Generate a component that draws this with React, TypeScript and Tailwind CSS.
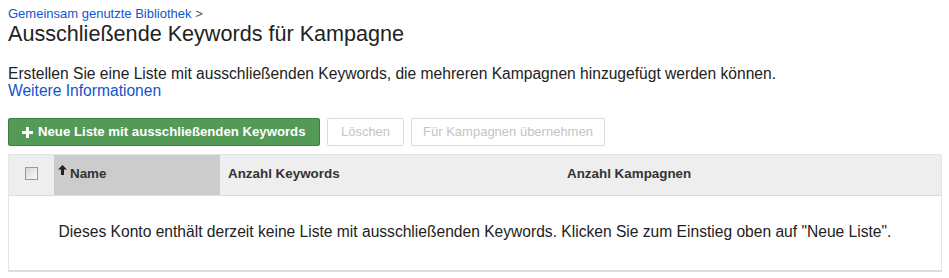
import React from "react";

export default function App() {
  return (
    <div className="w-[949px] h-[278px] bg-white text-[#222] overflow-hidden" style={{ fontFamily: '"Liberation Sans", Arial, sans-serif' }}>
      <div className="pl-[8px] pr-[7px] pt-[6px]">
        <div className="text-[13px] leading-[16px] text-[#1155cc]">
          Gemeinsam genutzte Bibliothek <span className="text-[#555]">&gt;</span>
        </div>
        <h1 className="text-[21.6px] leading-[24px] text-[#222]">Ausschließende Keywords für Kampagne</h1>
        <p className="text-[15.6px] leading-[17px] mt-[19px] text-[#222]">
          Erstellen Sie eine Liste mit ausschließenden Keywords, die mehreren Kampagnen hinzugefügt werden können.
        </p>
        <a className="block text-[15.6px] leading-[17px] text-[#1155cc]">Weitere Informationen</a>
        <div className="flex gap-[7px] mt-[19px]">
          <button className="h-[28px] w-[312px] bg-[#529a56] border border-[#3b7f3f] rounded-[2px] text-white font-bold text-[13.2px] flex items-center pl-[13px] gap-[5px]">
            <svg width="11" height="11" viewBox="0 0 11 11"><path d="M4 0h3v4h4v3H7v4H4V7H0V4h4z" fill="#fff" /></svg>
            Neue Liste mit ausschließenden Keywords
          </button>
          <button className="h-[28px] w-[77px] border border-[#dcdcdc] rounded-[2px] text-[#c4c4c4] text-[13px]">Löschen</button>
          <button className="h-[28px] w-[194px] border border-[#dcdcdc] rounded-[2px] text-[#c4c4c4] text-[13px]">Für Kampagnen übernehmen</button>
        </div>
        <div className="mt-[8px] border border-[#e5e5e5] border-b-[2px] border-b-[#dcdcdc]">
          <div className="flex h-[41px] bg-[#eeeeee] border-b border-[#dddddd] text-[13.4px] font-bold text-[#333]">
            <div className="w-[45px] flex justify-center pt-[12px]">
              <div className="w-[13px] h-[13px] border border-[#999] bg-gradient-to-br from-[#d8d8d8] to-[#fafafa]" />
            </div>
            <div className="w-[166px] bg-[#cccccc] flex items-start pt-[9px] pl-[4px] gap-[3px]">
              <svg width="9" height="10" viewBox="0 0 9 10" className="mt-[1px]"><path d="M4.5 0L9 4.5H6V10H3V4.5H0z" fill="#222" /></svg>
              <span>Name</span>
            </div>
            <div className="w-[347px] pt-[9px] pl-[8px]">Anzahl Keywords</div>
            <div className="flex-1 pt-[9px]">Anzahl Kampagnen</div>
          </div>
          <div className="h-[74px] flex items-center justify-center text-[15.6px] text-[#222] pb-[2px]">
            Dieses Konto enthält derzeit keine Liste mit ausschließenden Keywords. Klicken Sie zum Einstieg oben auf "Neue Liste".
          </div>
        </div>
      </div>
    </div>
  );
}
